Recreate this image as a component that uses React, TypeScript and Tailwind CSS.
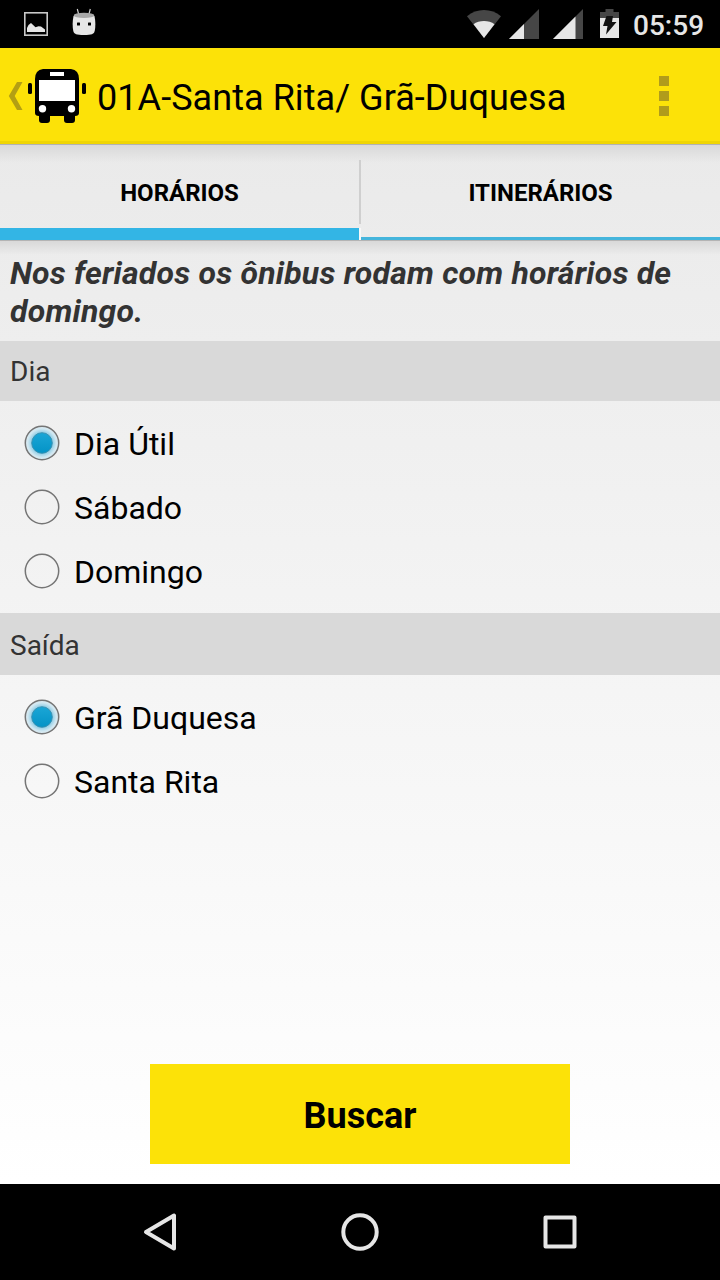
import { useState } from "react";

function StatusBar() {
  return (
    <div className="flex h-12 shrink-0 items-center bg-black pl-6 pr-4">
      <svg className="h-12 w-6" viewBox="0 0 24 48">
        <rect x="0.8" y="12.8" width="22.4" height="22.4" fill="none" stroke="#c8c8c8" strokeWidth="1.6" />
        <path d="M3 32v-4l1.500-3 2.500-2 4.500 4.200 3-1 2.500.3 4 3v2.500z" fill="#e6e6e6" />
      </svg>
      <svg className="ml-6 h-12 w-6" viewBox="0 0 24 48">
        <path d="M5.3 9l1.300 5M18.300 9l-1.300 5" stroke="#cfcfcf" strokeWidth="1.200" fill="none" />
        <path d="M1.500 16C.4 21 .4 27 1.300 31c.7 3 3 4 10.700 4s10-1 10.700-4c.9-4 .9-10-.2-15z" fill="#e6e6e6" />
        <ellipse cx="12" cy="15.400" rx="10.300" ry="2.600" fill="#a8a8a8" />
        <rect x="5" y="22.500" width="3" height="3" rx="0.500" fill="#000" />
        <rect x="16" y="22.500" width="3" height="3" rx="0.500" fill="#000" />
      </svg>
      <div className="flex-1" />
      <svg className="h-12 w-[34px]" viewBox="0 0 34 48">
        <path d="M17 38L0 16.200C9.500 8 24.500 8 34 16.200z" fill="#464646" />
        <path d="M17 38L6.500 24.300C12 20 22 20 27.500 24.300z" fill="#e6e6e6" />
      </svg>
      <svg className="ml-2 h-12 w-[30px]" viewBox="0 0 30 48">
        <path d="M0 39L30 9v30z" fill="#464646" />
        <path d="M0 39l15-15v15z" fill="#e6e6e6" />
      </svg>
      <svg className="ml-3.5 h-12 w-[30px]" viewBox="0 0 30 48">
        <path d="M0 39L30 9v30z" fill="#464646" />
        <path d="M0 39l22.500-22.500v22.500z" fill="#e6e6e6" />
      </svg>
      <svg className="ml-[17px] h-12 w-[19px]" viewBox="0 0 19 48">
        <path d="M5.500 9h8v3H19v6H0v-6h5.500z" fill="#464646" />
        <path d="M0 18h19v20H0z" fill="#e6e6e6" />
        <path d="M6.500 16h6.500l-1 6h4.500L6 34.500l1.500-8.500H3z" fill="#111" />
      </svg>
      <span className="ml-3.5 mt-[3px] w-[71px] whitespace-nowrap text-[28px] font-medium leading-none text-[#e6e6e6]">05:59</span>
    </div>
  );
}

function Header() {
  return (
    <header className="flex h-24 shrink-0 items-center border-b-[3px] border-[#efd503] bg-[#fce208] pt-[3px]">
      <svg className="ml-2 h-[30px] w-[15px]" viewBox="0 0 15 30">
        <path d="M9 1H14.500L6.700 15 14.500 29H9L.8 15z" fill="#b39f13" />
      </svg>
      <svg className="ml-[5px] h-[54px] w-[58px]" viewBox="0 0 58 54">
        <path d="M15 0H43Q51 1 51 10V44Q51 47 47 47V51Q47 54 44 54H39Q36 54 36 51V47H22V51Q22 54 19 54H14Q11 54 11 51V47Q7 47 7 44V10Q7 1 15 0z" fill="#000" />
        <rect x="0" y="14" width="4" height="11" rx="1.500" fill="#000" />
        <rect x="54" y="14" width="4" height="11" rx="1.500" fill="#000" />
        <path d="M22 3h14v4H22zM11 11h36v21H11z" fill="#fff" />
        <circle cx="14.500" cy="39.700" r="3.700" fill="#fff" />
        <circle cx="43.500" cy="39.700" r="3.700" fill="#fff" />
      </svg>
      <h1 className="ml-[11px] mt-1 flex-1 whitespace-nowrap text-[36px] leading-none tracking-[0.06px] text-black">01A-Santa Rita/ Grã-Duquesa</h1>
      <button aria-label="Menu" className="mr-[51px] flex flex-col gap-[5px]">
        <span className="size-2.5 bg-[#b09c1b]" />
        <span className="size-2.5 bg-[#b09c1b]" />
        <span className="size-2.5 bg-[#b09c1b]" />
      </button>
    </header>
  );
}

function Tabs() {
  return (
    <nav className="flex h-24 shrink-0 border-t border-[#b2b2b2] bg-linear-to-b from-[#d9d9d9] to-transparent to-[18px] text-[24px] font-bold leading-none text-black">
      <button className="flex w-[359px] items-center justify-center border-b-[12px] border-[#33b5e5] pt-3">HORÁRIOS</button>
      <div className="flex w-0.5 flex-col justify-between pt-[15px]">
        <span className="h-16 bg-[#cfcfcf]" />
        <span className="h-3 bg-[#f8f8f8]" />
      </div>
      <button className="flex w-[359px] items-center justify-center border-b-[3px] border-[#45b5dc] pt-[3px]">ITINERÁRIOS</button>
    </nav>
  );
}

function RadioGroup({ title, options, tall }: { title: string; options: string[]; tall?: boolean }) {
  const [selected, setSelected] = useState(options[0]);
  return (
    <section>
      <h2 className={`flex items-center bg-[#d9d9d9] pl-2.5 text-[28px] leading-none text-[#333] ${tall ? "h-[62px] pt-[3px]" : "h-[60px] pt-px"}`}>{title}</h2>
      <div className="py-2.5">
        {options.map((option) => (
          <button key={option} onClick={() => setSelected(option)} className="flex h-16 w-full items-center pl-6 text-left">
            <svg className="size-9" viewBox="0 0 36 36">
              {selected === option ? (
                <>
                  <defs>
                    <radialGradient id="glow">
                      <stop offset="0.600" stopColor="#8dcce5" />
                      <stop offset="0.850" stopColor="#d0e7f1" />
                      <stop offset="1" stopColor="#dfecf2" />
                    </radialGradient>
                    <linearGradient id="dot" x1="0" y1="0" x2="0" y2="1">
                      <stop offset="0" stopColor="#1ba6d6" />
                      <stop offset="1" stopColor="#0493c6" />
                    </linearGradient>
                  </defs>
                  <circle cx="18" cy="18" r="16.700" fill="url(#glow)" stroke="#757575" strokeWidth="1.500" />
                  <circle cx="18" cy="18" r="10.300" fill="url(#dot)" stroke="#3a8fae" strokeWidth="0.900" />
                </>
              ) : (
                <circle cx="18" cy="18" r="16.700" fill="none" stroke="#757575" strokeWidth="1.500" />
              )}
            </svg>
            <span className="ml-3.5 pt-0.5 text-[32px] leading-none text-black">{option}</span>
          </button>
        ))}
      </div>
    </section>
  );
}

export default function App() {
  return (
    <div className="flex h-[1280px] w-[720px] flex-col overflow-hidden bg-black font-['Roboto',sans-serif]">
      <StatusBar />
      <Header />
      <main className="flex min-h-0 flex-1 flex-col bg-linear-to-b from-[#eaeaea] to-white">
        <Tabs />
        <p className="h-[101px] shrink-0 border-t border-[#b4b4b4] bg-linear-to-b from-[#d9d9d9] to-transparent to-[14px] pl-2.5 pt-[13px] text-[32px] font-bold italic leading-[38px] tracking-[0.21px] text-[#333]">
          Nos feriados os ônibus rodam com horários de domingo.
        </p>
        <RadioGroup title="Dia" options={["Dia Útil", "Sábado", "Domingo"]} />
        <RadioGroup title="Saída" options={["Grã Duquesa", "Santa Rita"]} tall />
        <button className="mx-auto mb-5 mt-auto h-[100px] w-[420px] bg-[#fce208] pt-1 text-[36px] font-bold leading-none text-black">Buscar</button>
      </main>
      <footer className="flex h-24 shrink-0 items-center justify-between bg-black px-[140px]">
        <svg className="size-10" viewBox="0 0 40 40" fill="none" stroke="#e6e6e6" strokeWidth="4" strokeLinejoin="round">
          <path d="M6 20L34 3.500V36.500z" />
        </svg>
        <svg className="size-10" viewBox="0 0 40 40" fill="none" stroke="#e6e6e6" strokeWidth="4">
          <circle cx="20" cy="20" r="16.700" />
        </svg>
        <svg className="size-10" viewBox="0 0 40 40" fill="none" stroke="#e6e6e6" strokeWidth="4" strokeLinejoin="round">
          <path d="M5.500 5.500h29v29h-29z" />
        </svg>
      </footer>
    </div>
  );
}
